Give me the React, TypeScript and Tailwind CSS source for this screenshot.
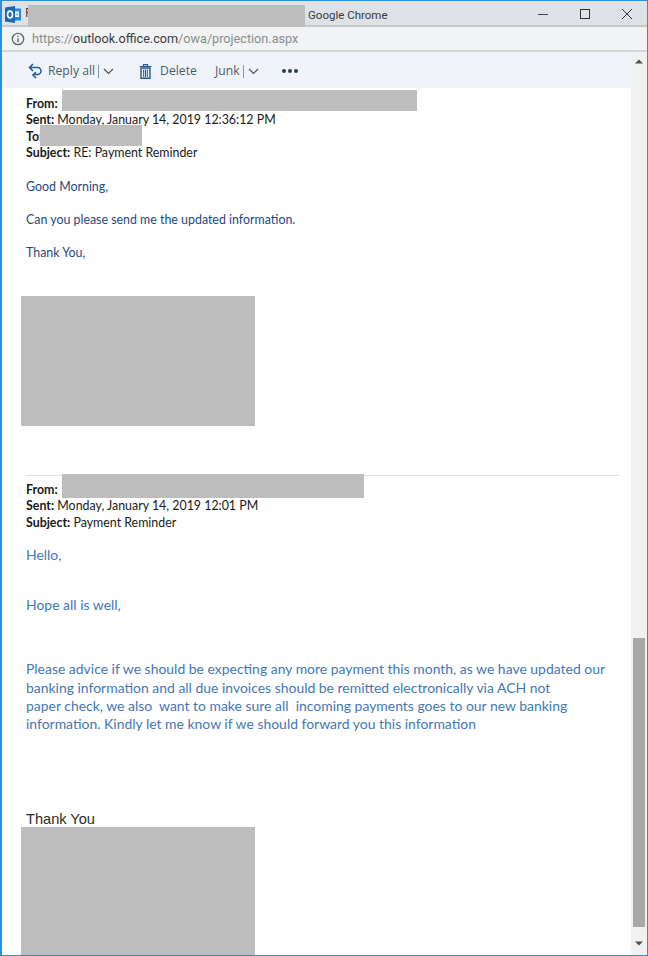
import React from "react";

function Redact({ className }: { className: string }) {
  return <div className={"absolute bg-[#bdbdbd] " + className} />;
}

function OutlookLogo() {
  return (
    <svg width="16" height="17" viewBox="0 0 16 17" className="shrink-0 mt-[2px]">
      <path d="M8 2.5h8v12H8z" fill="#2a86d8" />
      <path d="M10 5.5h4v5.5h-4z" fill="#fff" />
      <path d="M10.8 8l1.2 1.2 1.5-2" fill="none" stroke="#2a86d8" strokeWidth="0.9" />
      <path d="M0 1.5L10 0V17L0 15.5z" fill="#1668b8" />
      <ellipse cx="5" cy="8.5" rx="2.5" ry="3.4" fill="none" stroke="#fff" strokeWidth="1.7" />
    </svg>
  );
}

function Chevron() {
  return (
    <svg width="11" height="7" viewBox="0 0 11 7" className="shrink-0">
      <path d="M1 1l4.5 4.5L10 1" fill="none" stroke="#44566c" strokeWidth="1.2" />
    </svg>
  );
}

function HeadLine({ label, value }: { label: string; value: string }) {
  return (
    <div className="h-[16.6px] leading-[16.6px] whitespace-pre text-[#1a1a1a]">
      <b className="font-bold">{label}</b> {value}
    </div>
  );
}

export default function App() {
  return (
    <div className="relative w-[648px] h-[956px] overflow-hidden bg-white border-t border-l-2 border-r border-b border-[#2b90d9] font-['Lato',sans-serif]">
      {/* title bar */}
      <div className="h-[24px] bg-[#dee1e6] border-b-2 border-[#c6c8cb] box-content flex items-center pl-[3px] pr-[6px] pt-0 shrink-0">
        <OutlookLogo />
        <span className="ml-[4px] text-[12px] text-[#333] font-['Open_Sans',sans-serif]">F</span>
        <span className="absolute left-[306px] top-[5px] text-[11.5px] leading-[18px] text-[#3a3a3a] font-['Roboto',sans-serif]">
          Google Chrome
        </span>
        <div className="ml-auto flex items-center gap-[32px] pr-[9px] pt-[2px]">
          <svg width="10" height="10" viewBox="0 0 10 10">
            <path d="M0 5.5h10" stroke="#444" strokeWidth="1" />
          </svg>
          <svg width="10" height="10" viewBox="0 0 10 10">
            <rect x="0.5" y="0.5" width="9" height="9" fill="none" stroke="#333" strokeWidth="1" />
          </svg>
          <svg width="10" height="10" viewBox="0 0 10 10">
            <path d="M0 0l10 10M10 0L0 10" stroke="#333" strokeWidth="1" />
          </svg>
        </div>
      </div>
      {/* url bar */}
      <div className="h-[23px] bg-[#f1f3f4] border-b-2 border-[#d3d5d6] box-content flex items-center pl-[9px]">
        <svg width="14" height="14" viewBox="0 0 14 14">
          <circle cx="7" cy="7" r="5.7" fill="none" stroke="#5f6368" strokeWidth="1.3" />
          <path d="M7 6.2v4M7 3.7v1.4" stroke="#5f6368" strokeWidth="1.4" />
        </svg>
        <span className="ml-[7px] pt-[1px] text-[12.65px] text-[#8a8d91] font-['Roboto',sans-serif]">
          https://<span className="text-[#3a3b3d]">outlook.office.com</span>/owa/projection.aspx
        </span>
      </div>
      {/* main area */}
      <div className="flex h-[904px]">
        <div className="flex-1 min-w-0 flex flex-col">
          {/* toolbar */}
          <div className="h-[36px] shrink-0 bg-[#f0f4fa] flex items-center pl-[26px] pt-[2px] text-[12.2px] text-[#4d5a68] font-['Open_Sans',sans-serif]">
            <svg width="15" height="17" viewBox="0 0 15 17" className="shrink-0">
              <path d="M5 1L1.5 4.5 5 8M1.5 4.5H9.5a3.5 3.5 0 0 1 0 7H6" fill="none" stroke="#1d5a96" strokeWidth="1.5" />
              <path d="M8 9l-3 3 3 3" fill="none" stroke="#1d5a96" strokeWidth="1.5" />
            </svg>
            <span className="ml-[5px]">Reply all</span>
            <span className="ml-[3px] w-px h-[13px] bg-[#8a97a6]" />
            <span className="ml-[4px]"><Chevron /></span>
            <svg width="13" height="15" viewBox="0 0 13 15" className="ml-[25px] shrink-0">
              <path d="M0.5 2.5h12M4.5 2V0.7h4V2" fill="none" stroke="#1d5a96" strokeWidth="1.2" />
              <path d="M2 4h9v10.3H2z" fill="none" stroke="#1d5a96" strokeWidth="1.4" />
              <path d="M4.7 5.5v7.5M6.5 5.5v7.5M8.3 5.5v7.5" stroke="#1d5a96" strokeWidth="1" />
            </svg>
            <span className="ml-[8px]">Delete</span>
            <span className="ml-[18px]">Junk</span>
            <span className="ml-[3px] w-px h-[13px] bg-[#8a97a6]" />
            <span className="ml-[4px]"><Chevron /></span>
            <span className="ml-[23px] flex gap-[2px]">
              <i className="block w-[4px] h-[4px] rounded-full bg-[#2c3e50]" />
              <i className="block w-[4px] h-[4px] rounded-full bg-[#2c3e50]" />
              <i className="block w-[4px] h-[4px] rounded-full bg-[#2c3e50]" />
            </span>
          </div>
          {/* mail body */}
          <div className="flex-1 min-h-0 pl-[24px] pr-[12px] pt-[7.5px] overflow-hidden text-[12.4px]">
            <HeadLine label="From:" value="" />
            <HeadLine label="Sent:" value="Monday, January 14, 2019 12:36:12 PM" />
            <HeadLine label="To:" value="" />
            <HeadLine label="Subject:" value="RE: Payment Reminder" />
            <div className="mt-[17.2px] text-[#1f497d] leading-[16.6px]">
              <p>Good Morning,</p>
              <p className="mt-[16.2px]">Can you please send me the updated information.</p>
              <p className="mt-[16.6px]">Thank You,</p>
            </div>
            <div className="h-[130px] w-[234px] ml-[-5px] mt-[35px]" />
            <div className="mt-[48.6px] border-t border-[#e1e1e1] pt-[5.5px]">
              <HeadLine label="From:" value="" />
              <HeadLine label="Sent:" value="Monday, January 14, 2019 12:01 PM" />
              <HeadLine label="Subject:" value="Payment Reminder" />
            </div>
            <div className="text-[13.95px] leading-[18.3px] text-[#4478b5]">
              <p className="mt-[14.5px]">Hello,</p>
              <p className="mt-[31.7px]">Hope all is well,</p>
              <p className="mt-[46.2px] whitespace-pre">
                Please advice if we should be expecting any more payment this month, as we have updated our
                {"\n"}banking information and all due invoices should be remitted electronically via ACH not
                {"\n"}paper check, we also  want to make sure all  incoming payments goes to our new banking
                {"\n"}information. Kindly let me know if we should forward you this information
              </p>
            </div>
            <p className="mt-[76.5px] text-[14.6px] leading-[18px] text-[#2a2a2a] font-['Liberation_Sans',sans-serif]">Thank You</p>
          </div>
        </div>
        {/* scrollbar */}
        <div className="w-[16px] shrink-0 bg-[#f1f1f1] flex flex-col items-center pt-[7px]">
          <svg width="8" height="5" viewBox="0 0 8 5"><path d="M4 0.5L8 4.5H0z" fill="#505050" /></svg>
          <div className="mt-[574px] w-[12px] h-[289px] bg-[#a8a8a8]" />
          <svg width="8" height="5" viewBox="0 0 8 5" className="mt-[14px]"><path d="M0 0.5h8L4 4.5z" fill="#505050" /></svg>
        </div>
      </div>
      {/* redactions laid over the text */}
      <Redact className="left-[26px] top-[4px] w-[277px] h-[22px]" />
      <Redact className="left-[60px] top-[89px] w-[355px] h-[21px]" />
      <Redact className="left-[38px] top-[124px] w-[102px] h-[21px]" />
      <Redact className="left-[19px] top-[295px] w-[234px] h-[130px]" />
      <Redact className="left-[60px] top-[473px] w-[302px] h-[24px]" />
      <Redact className="left-[19px] top-[826px] w-[234px] h-[130px]" />
    </div>
  );
}
